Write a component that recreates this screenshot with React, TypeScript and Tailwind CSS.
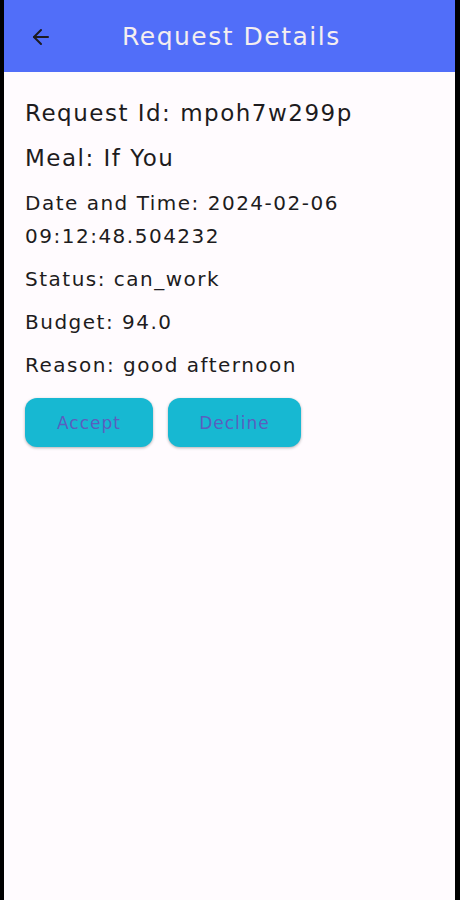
import { ArrowLeft } from "lucide-react";

const font = { fontFamily: '"DejaVu Sans", "Noto Sans", sans-serif' };

export default function App() {
  return (
    <div className="flex h-[900px] w-[460px] bg-black" style={font}>
      <div className="ml-[4px] flex w-[451px] flex-col bg-[#fffbfe]">
        <header className="flex h-[72px] items-center bg-[#516ef9] pl-[25px] pt-[2px]">
          <ArrowLeft className="h-[24px] w-[24px] text-[#1d1b20]" strokeWidth={2} />
          <h1 className="ml-[69px] text-[25px] tracking-[1.5px] text-[#f4eef0]">Request Details</h1>
        </header>
        <main className="flex flex-col px-[21px] pt-[24px] text-[#1d1b20] tracking-[1.5px]">
          <p className="text-[23px] leading-[34px]">Request Id: mpoh7w299p</p>
          <p className="mt-[11px] text-[23px] leading-[34px]">Meal: If You</p>
          <p className="mt-[12px] text-[20px] leading-[33px]">
            Date and Time: 2024-02-06
            <br />
            09:12:48.504232
          </p>
          <p className="mt-[10px] text-[20px] leading-[33px]">Status: can_work</p>
          <p className="mt-[10px] text-[20px] leading-[33px]">Budget: 94.0</p>
          <p className="mt-[10px] text-[20px] leading-[33px]">Reason: good afternoon</p>
          <div className="mt-[16px] flex gap-[15px]">
            <button className="h-[49px] w-[128px] rounded-[12px] bg-[#17b8d2] pt-[2px] text-[17px] tracking-[1px] text-[#5a5fbf] shadow-[0_1px_3px_rgba(0,0,0,0.3)]">
              Accept
            </button>
            <button className="h-[49px] w-[133px] rounded-[12px] bg-[#17b8d2] pt-[2px] text-[17px] tracking-[1px] text-[#5a5fbf] shadow-[0_1px_3px_rgba(0,0,0,0.3)]">
              Decline
            </button>
          </div>
        </main>
      </div>
    </div>
  );
}
